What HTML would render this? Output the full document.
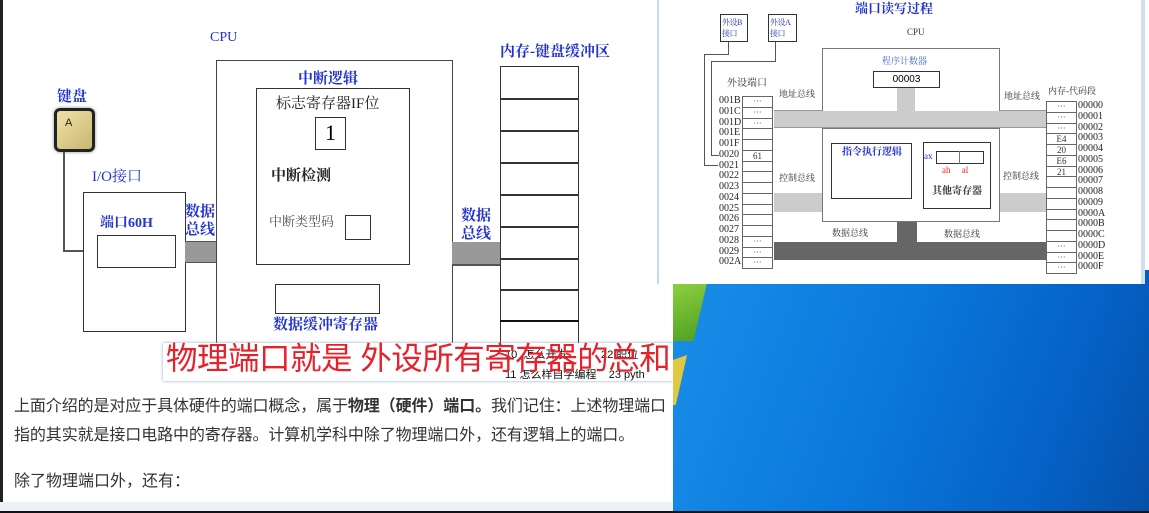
<!DOCTYPE html>
<html><head><meta charset="utf-8"><style>
*{margin:0;padding:0;box-sizing:border-box}
body{width:1149px;height:513px;overflow:hidden;position:relative;background:#fff;font-family:"Liberation Serif","Noto Serif CJK SC",serif}
.a{position:absolute}
.b{position:absolute;border:1.5px solid #333;background:#fff}
.blue{color:#2233cc}
.t{position:absolute;white-space:nowrap;line-height:1}
.sans{font-family:"Liberation Sans","Noto Sans CJK SC",sans-serif}
.pt div{height:10.75px;border-bottom:1px solid #666;font-size:8px;text-align:center;line-height:10px;color:#333}
.pl div{height:10.75px;font-size:10px;line-height:10.75px;color:#222}
</style></head><body>
<div class="a" style="left:0;top:0;width:3px;height:513px;background:#222"></div>
<div class="t blue" style="left:210px;top:31px;font-size:14px">CPU</div>
<div class="b" style="left:216px;top:60px;width:237px;height:290px;border-color:#444"></div>
<div class="t blue" style="left:298px;top:72px;font-size:15px;font-weight:bold">中断逻辑</div>
<div class="b" style="left:256px;top:88px;width:154px;height:177px"></div>
<div class="t" style="left:276px;top:97px;font-size:15px;color:#222">标志寄存器IF位</div>
<div class="b" style="left:315px;top:117px;width:31px;height:33px;font-size:22px;text-align:center;line-height:30px">1</div>
<div class="t" style="left:271px;top:169px;font-size:15px;font-weight:bold;color:#222">中断检测</div>
<div class="t" style="left:269px;top:215px;font-size:13px;color:#555">中断类型码</div>
<div class="b" style="left:345px;top:215px;width:26px;height:25px"></div>
<div class="b" style="left:275px;top:284px;width:105px;height:30px"></div>
<div class="t blue" style="left:273px;top:318px;font-size:15px;font-weight:bold">数据缓冲寄存器</div>
<div class="t blue" style="left:500px;top:45px;font-size:15px;font-weight:bold">内存-键盘缓冲区</div>
<div class="b" style="left:500px;top:66px;width:79px;height:290px;border-bottom:none"></div>
<div class="a" style="left:500px;top:98px;width:79px;height:1.5px;background:#333"></div>
<div class="a" style="left:500px;top:130px;width:79px;height:1.5px;background:#333"></div>
<div class="a" style="left:500px;top:162px;width:79px;height:1.5px;background:#333"></div>
<div class="a" style="left:500px;top:194px;width:79px;height:1.5px;background:#333"></div>
<div class="a" style="left:500px;top:226px;width:79px;height:1.5px;background:#333"></div>
<div class="a" style="left:500px;top:258px;width:79px;height:1.5px;background:#333"></div>
<div class="a" style="left:500px;top:289px;width:79px;height:1.5px;background:#333"></div>
<div class="a" style="left:500px;top:320px;width:79px;height:2px;background:#111"></div>
<div class="t blue" style="left:57px;top:90px;font-size:15px;font-weight:bold">键盘</div>
<div class="a" style="left:54px;top:108px;width:41px;height:44px;border:3px solid #222;border-radius:6px;background:linear-gradient(135deg,#efe2a8,#c9b670);box-shadow:0 0 3px #888"></div>
<div class="t sans" style="left:65px;top:118px;font-size:11px;color:#222">A</div>
<div class="a" style="left:63px;top:152px;width:1.5px;height:99px;background:#555"></div>
<div class="a" style="left:63px;top:250px;width:20px;height:1.5px;background:#555"></div>
<div class="t blue" style="left:92px;top:170px;font-size:15px">I/O接口</div>
<div class="b" style="left:83px;top:192px;width:103px;height:140px"></div>
<div class="t blue" style="left:100px;top:217px;font-size:14px;font-weight:bold">端口60H</div>
<div class="b" style="left:97px;top:235px;width:79px;height:33px"></div>
<div class="t blue" style="left:185px;top:203px;font-size:15px;font-weight:bold;line-height:18px">数据<br>总线</div>
<div class="a" style="left:185px;top:241px;width:31px;height:22px;background:#999;border-top:1px solid #555;border-bottom:1px solid #555"></div>
<div class="t blue" style="left:461px;top:207px;font-size:15px;font-weight:bold;line-height:18px">数据<br>总线</div>
<div class="a" style="left:452px;top:242px;width:48px;height:24px;background:#999;border-bottom:2px solid #555"></div>
<div class="a" style="left:163px;top:343px;width:510px;height:38px;background:#fff;box-shadow:0 0 3px #8ab"></div>
<div class="t sans" style="left:505px;top:350px;font-size:11px;color:#111">10 &nbsp;怎么开发 &nbsp; &nbsp; &nbsp; &nbsp; &nbsp; 22 职位</div>
<div class="t sans" style="left:505px;top:370px;font-size:11px;color:#111">11 怎么样自学编程 &nbsp; &nbsp;23 pyth</div>
<div class="t sans" style="left:166px;top:343px;font-size:31.5px;color:#e8202a;letter-spacing:-0.5px">物理端口就是 外设所有寄存器的总和</div>
<div class="t sans" style="left:14px;top:399px;font-size:16px;color:#333;letter-spacing:-0.1px">上面介绍的是对应于具体硬件的端口概念，属于<b>物理（硬件）端口。</b>我们记住：上述物理端口</div>
<div class="t sans" style="left:14px;top:428px;font-size:16px;color:#333;letter-spacing:-0.1px">指的其实就是接口电路中的寄存器。计算机学科中除了物理端口外，还有逻辑上的端口。</div>
<div class="t sans" style="left:14px;top:474px;font-size:16px;color:#333">除了物理端口外，还有：</div>
<div class="a" style="left:0;top:502px;width:673px;height:9px;background:#eef2f8"></div>
<div class="a" style="left:673px;top:270px;width:476px;height:243px;background:linear-gradient(110deg,#1a8ee8 0%,#0a78dc 45%,#0560c4 80%,#0550a8 100%)"></div>
<div class="a" style="left:673px;top:283px;width:34px;height:58px;background:linear-gradient(160deg,#8ed040,#4e9e20);clip-path:polygon(0 0,100% 0,60% 100%,0 100%)"></div>
<div class="a" style="left:673px;top:355px;width:14px;height:50px;background:#e0c840;clip-path:polygon(0 10%,100% 0,20% 100%,0 100%)"></div>
<div class="a" style="left:0;top:511px;width:1149px;height:2px;background:#111"></div>
<div class="a" style="left:657px;top:0;width:488px;height:284px;background:#fff;border-left:2px solid #c8d8ee;border-right:4px solid #cfe0f4"></div>
<div class="t blue" style="left:855px;top:2px;font-size:13px;font-weight:bold">端口读写过程</div>
<div class="b" style="left:720px;top:14px;width:28px;height:28px;border-width:1px;font-size:8px;line-height:11px;color:#2233cc;padding:2px 0 0 1px;white-space:nowrap;letter-spacing:-0.5px">外设B<br>接口</div>
<div class="b" style="left:768px;top:14px;width:29px;height:28px;border-width:1px;font-size:8px;line-height:11px;color:#2233cc;padding:2px 0 0 1px;white-space:nowrap;letter-spacing:-0.5px">外设A<br>接口</div>
<div class="a" style="left:728px;top:42px;width:1px;height:12px;background:#555"></div>
<div class="a" style="left:704px;top:54px;width:25px;height:1px;background:#555"></div>
<div class="a" style="left:704px;top:54px;width:1px;height:112px;background:#555"></div>
<div class="a" style="left:704px;top:165px;width:14px;height:1px;background:#555"></div>
<div class="a" style="left:775px;top:42px;width:1px;height:20px;background:#555"></div>
<div class="a" style="left:711px;top:61px;width:65px;height:1px;background:#555"></div>
<div class="a" style="left:711px;top:61px;width:1px;height:95px;background:#555"></div>
<div class="a" style="left:711px;top:155px;width:8px;height:1px;background:#555"></div>
<div class="t" style="left:907px;top:28px;font-size:9px;color:#333">CPU</div>
<div class="a" style="left:774px;top:110px;width:272px;height:18px;background:#ccc;border-top:1px solid #999;border-bottom:1px solid #999"></div>
<div class="a" style="left:774px;top:193px;width:48px;height:19px;background:#ccc"></div>
<div class="a" style="left:999px;top:193px;width:47px;height:19px;background:#ccc"></div>
<div class="a" style="left:774px;top:242px;width:272px;height:18px;background:#666"></div>
<div class="a" style="left:897px;top:221px;width:20px;height:22px;background:#666"></div>
<div class="a" style="left:822px;top:48px;width:178px;height:63px;border:1px solid #777;border-bottom:none;background:#fff"></div>
<div class="a" style="left:897px;top:88px;width:18px;height:23px;background:#ccc"></div>
<div class="a" style="left:822px;top:128px;width:178px;height:94px;border:1px solid #777;background:#fff"></div>
<div class="t blue" style="left:882px;top:57px;font-size:9px;color:#4466cc">程序计数器</div>
<div class="b" style="left:873px;top:71px;width:67px;height:17px;border-width:1px;font-size:10px;text-align:center;line-height:15px;font-family:'Liberation Sans',sans-serif">00003</div>
<div class="b" style="left:831px;top:143px;width:81px;height:56px;border-width:1px"></div>
<div class="t blue" style="left:842px;top:148px;font-size:10px;font-weight:bold">指令执行逻辑</div>
<div class="b" style="left:923px;top:142px;width:68px;height:67px;border-width:1px"></div>
<div class="t blue" style="left:924px;top:152px;font-size:9px">ax</div>
<div class="b" style="left:936px;top:151px;width:48px;height:13px;border-width:1px"></div>
<div class="a" style="left:959px;top:151px;width:1px;height:13px;background:#777"></div>
<div class="t" style="left:942px;top:166px;font-size:9px;color:#e22">ah &nbsp; &nbsp; al</div>
<div class="t" style="left:932px;top:187px;font-size:10px;font-weight:bold;color:#333">其他寄存器</div>
<div class="t" style="left:779px;top:90px;font-size:9px;color:#333">地址总线</div>
<div class="t" style="left:1004px;top:92px;font-size:9px;color:#333">地址总线</div>
<div class="t" style="left:779px;top:174px;font-size:9px;color:#333">控制总线</div>
<div class="t" style="left:1003px;top:172px;font-size:9px;color:#333">控制总线</div>
<div class="t" style="left:832px;top:229px;font-size:9px;color:#333">数据总线</div>
<div class="t" style="left:944px;top:230px;font-size:9px;color:#333">数据总线</div>
<div class="t" style="left:727px;top:79px;font-size:10px;color:#333">外设端口</div>
<div class="t" style="left:1048px;top:87px;font-size:9px;color:#333">内存-代码段</div>
<div class="a pl" style="left:719px;top:96px">
<div>001B</div><div>001C</div><div>001D</div><div>001E</div><div>001F</div><div>0020</div><div>0021</div><div>0022</div><div>0023</div><div>0024</div><div>0025</div><div>0026</div><div>0027</div><div>0028</div><div>0029</div><div>002A</div></div>
<div class="a pt" style="left:742px;top:96px;width:31px;border:1px solid #666;border-bottom:none;background:#fff">
<div>···</div><div>···</div><div>···</div><div></div><div></div><div style="font-size:9px">61</div><div></div><div></div><div></div><div></div><div></div><div></div><div></div><div>···</div><div>···</div><div>···</div></div>
<div class="a pt" style="left:1046px;top:101px;width:31px;border:1px solid #666;border-bottom:none;background:#fff">
<div>···</div><div>···</div><div>···</div><div style="font-size:9px">E4</div><div style="font-size:9px">20</div><div style="font-size:9px">E6</div><div style="font-size:9px">21</div><div></div><div></div><div></div><div></div><div></div><div></div><div>···</div><div>···</div><div>···</div></div>
<div class="a pl" style="left:1078px;top:101px">
<div>00000</div><div>00001</div><div>00002</div><div>00003</div><div>00004</div><div>00005</div><div>00006</div><div>00007</div><div>00008</div><div>00009</div><div>0000A</div><div>0000B</div><div>0000C</div><div>0000D</div><div>0000E</div><div>0000F</div></div>
</body></html>
